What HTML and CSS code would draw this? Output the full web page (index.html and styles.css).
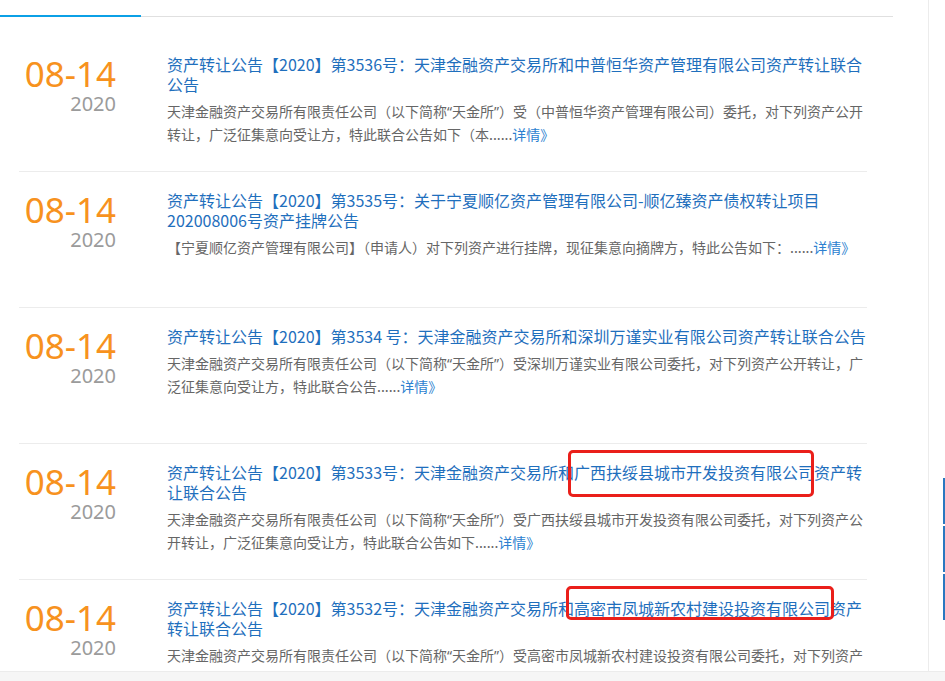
FILE: index.html
```html
<!DOCTYPE html>
<html lang="zh-CN">
<head>
<meta charset="utf-8">
<title>资产转让公告</title>
<link rel="stylesheet" href="styles.css">
</head>
<body>
<div class="page">
  <div class="main">
    <div class="tabs"><div class="tab-active"></div></div>
    <ul class="list">
      <li class="item">
        <div class="date"><div class="md">08-14</div><div class="yr">2020</div></div>
        <div class="body">
          <a class="title">资产转让公告【2020】第3536号：天津金融资产交易所和中普恒华资产管理有限公司资产转让联合公告</a>
          <p class="desc">天津金融资产交易所有限责任公司（以下简称<span class="q">“</span>天金所<span class="q">”</span>）受（中普恒华资产管理有限公司）委托，对下列资产公开转让，广泛征集意向受让方，特此联合公告如下（本......<a class="more">详情》</a></p>
        </div>
      </li>
      <li class="item">
        <div class="date"><div class="md">08-14</div><div class="yr">2020</div></div>
        <div class="body">
          <a class="title">资产转让公告【2020】第3535号：关于宁夏顺亿资产管理有限公司-顺亿臻资产债权转让项目202008006号资产挂牌公告</a>
          <p class="desc">【宁夏顺亿资产管理有限公司】（申请人）对下列资产进行挂牌，现征集意向摘牌方，特此公告如下：......<a class="more">详情》</a></p>
        </div>
      </li>
      <li class="item">
        <div class="date"><div class="md">08-14</div><div class="yr">2020</div></div>
        <div class="body">
          <a class="title">资产转让公告【2020】第3534 号：天津金融资产交易所和深圳万谨实业有限公司资产转让联合公告</a>
          <p class="desc">天津金融资产交易所有限责任公司（以下简称<span class="q">“</span>天金所<span class="q">”</span>）受深圳万谨实业有限公司委托，对下列资产公开转让，广泛征集意向受让方，特此联合公告......<a class="more">详情》</a></p>
        </div>
      </li>
      <li class="item">
        <div class="date"><div class="md">08-14</div><div class="yr">2020</div></div>
        <div class="body">
          <a class="title">资产转让公告【2020】第3533号：天津金融资产交易所和广西扶绥县城市开发投资有限公司资产转让联合公告</a>
          <p class="desc">天津金融资产交易所有限责任公司（以下简称<span class="q">“</span>天金所<span class="q">”</span>）受广西扶绥县城市开发投资有限公司委托，对下列资产公开转让，广泛征集意向受让方，特此联合公告如下......<a class="more">详情》</a></p>
        </div>
      </li>
      <li class="item">
        <div class="date"><div class="md">08-14</div><div class="yr">2020</div></div>
        <div class="body">
          <a class="title">资产转让公告【2020】第3532号：天津金融资产交易所和高密市凤城新农村建设投资有限公司资产转让联合公告</a>
          <p class="desc">天津金融资产交易所有限责任公司（以下简称<span class="q">“</span>天金所<span class="q">”</span>）受高密市凤城新农村建设投资有限公司委托，对下列资产公开转让，广泛征集意向受让方，特此联合公告如下......<a class="more">详情》</a></p>
        </div>
      </li>
    </ul>
    <div class="mark mark-1"></div>
    <div class="mark mark-2"></div>
  </div>
  <div class="side">
    <div class="side-bar bar-1"></div>
    <div class="side-bar bar-2"></div>
    <div class="side-bar bar-3"></div>
  </div>
</div>
<div class="bottom"></div>
</body>
</html>
```
FILE: styles.css
```css
html, body {
  margin: 0;
  padding: 0;
  overflow: hidden;
  background: #fff;
}
body {
  width: 945px;
  height: 681px;
  font-family: "Noto Sans CJK SC", "Noto Sans", sans-serif;
}
.page {
  display: flex;
  height: 671px;
}
.main {
  position: relative;
  width: 928px;
  flex: none;
  border-right: 1px solid #ececec;
  overflow: hidden;
}
.tabs {
  width: 893px;
  height: 16px;
  border-bottom: 1px solid #e0e0e0;
  display: flex;
  align-items: flex-start;
}
.tab-active {
  width: 141px;
  height: 15px;
  border-bottom: 2px solid #0ba0e6;
}
.list {
  list-style: none;
  margin: 19px 0 0 19px;
  padding: 0;
  width: 848px;
}
.item {
  display: flex;
  box-sizing: border-box;
  height: 136px;
  padding-top: 18px;
  border-bottom: 1px solid #ececec;
}
.date {
  width: 97px;
  flex: none;
  text-align: right;
  margin-top: 2px;
  font-family: "Noto Sans", sans-serif;
}
.md {
  font-size: 35px;
  line-height: 36px;
  color: #f7921e;
}
.yr {
  font-size: 20px;
  line-height: 24px;
  color: #9b9b9b;
}
.body {
  margin-left: 51px;
  width: 700px;
}
.title {
  display: block;
  font-size: 16px;
  line-height: 20px;
  color: #1f6fbd;
  text-decoration: none;
}
.desc {
  margin: 6px 0 0;
  font-size: 14px;
  line-height: 22px;
  color: #666;
}
.q {
  font-family: "Noto Sans", sans-serif;
}
.more {
  color: #2d7fd0;
}
.mark {
  position: absolute;
  box-sizing: border-box;
  border: 3px solid #ea1f1a;
  border-radius: 5px;
}
.mark-1 {
  left: 568px;
  top: 450px;
  width: 246px;
  height: 47px;
}
.mark-2 {
  left: 566px;
  top: 586px;
  width: 268px;
  height: 34px;
}
.side {
  position: relative;
  flex: 1;
}
.side-bar {
  position: absolute;
  right: 0;
  width: 2px;
  height: 46px;
  background: #2a78c0;
}
.bar-1 { top: 478px; }
.bar-2 { top: 526px; }
.bar-3 { top: 574px; }
.bottom {
  height: 9px;
  background: #f6f6f6;
  border-top: 1px solid #ececec;
}
```
